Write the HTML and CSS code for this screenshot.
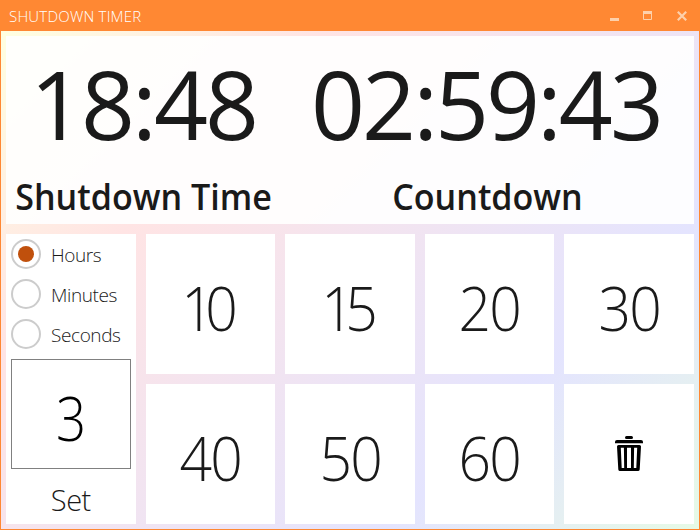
FILE: index.html
```html
<!DOCTYPE html>
<html lang="en">
<head>
<meta charset="utf-8">
<title>Shutdown Timer</title>
<link rel="stylesheet" href="styles.css">
</head>
<body>
<div class="window">
  <header class="titlebar">
    <span class="title">SHUTDOWN TIMER</span>
    <svg class="controls" width="80" height="12" viewBox="0 0 80 12" fill="none" stroke="#fdd0ab">
      <path d="M0 9.5H9" stroke-width="3"/>
      <path d="M33 2.5H42" stroke-width="3"/>
      <path d="M33.5 2V9.5H41.5V2"/>
      <path d="M67.8 1.8L76.2 10.2M76.2 1.8L67.8 10.2" stroke-width="2.2"/>
    </svg>
  </header>
  <main class="content">
    <section class="clocks">
      <div class="clock shutdown">
        <div class="digits">18:48</div>
        <div class="caption">Shutdown Time</div>
      </div>
      <div class="clock countdown">
        <div class="digits">02:59:43</div>
        <div class="caption">Countdown</div>
      </div>
    </section>
    <section class="board">
      <div class="custom">
        <div class="option"><span class="radio checked"></span><span class="label">Hours</span></div>
        <div class="option"><span class="radio"></span><span class="label">Minutes</span></div>
        <div class="option"><span class="radio"></span><span class="label">Seconds</span></div>
        <div class="amount"><span>3</span></div>
        <div class="set">Set</div>
      </div>
      <div class="tile narrow"><span>10</span></div>
      <div class="tile narrow"><span>15</span></div>
      <div class="tile"><span>20</span></div>
      <div class="tile"><span>30</span></div>
      <div class="tile"><span>40</span></div>
      <div class="tile"><span>50</span></div>
      <div class="tile"><span>60</span></div>
      <div class="tile">
        <svg class="trash" width="28" height="36" viewBox="0 0 28 36">
          <rect x="10" y="0" width="8" height="3" rx="1.5"/>
          <path d="M2 4H26Q28 4 28 6V7.3H0V6Q0 4 2 4Z"/>
          <path fill-rule="evenodd" d="M3.5 9H24.5Q26 9 26 10.5L24.7 33.5Q24.5 35 23 35H5Q3.5 35 3.3 33.5L2 10.5Q2 9 3.5 9ZM5.8 11.8L6.7 32H9.2L8.9 11.8ZM12 11.8V32H16V11.8ZM19.1 11.8L18.8 32H21.3L22.2 11.8Z"/>
        </svg>
      </div>
    </section>
  </main>
</div>
</body>
</html>
```
FILE: styles.css
```css
* { box-sizing: border-box; }

body {
  margin: 0;
  font-family: "Open Sans", "Noto Sans", sans-serif;
  color: #1a1a1a;
}

.window {
  width: 700px;
  height: 530px;
  display: flex;
  flex-direction: column;
  background: #ff8833;
  padding: 0 1px 1px;
  overflow: hidden;
}

.titlebar {
  flex: 0 0 31px;
  display: flex;
  align-items: center;
  justify-content: space-between;
  padding: 0 9px 0 8px;
  color: #fff;
}

.title {
  font-size: 15px;
  line-height: 20px;
  font-weight: 300;
  letter-spacing: 0.2px;
  padding-top: 1px;
}

.content {
  flex: 1;
  min-height: 0;
  display: flex;
  flex-direction: column;
  gap: 10px;
  padding: 5px;
  background: linear-gradient(135deg, #ffffe0 0%, #ffe4e4 27%, #e4e4fe 74%, #e6fae6 100%);
}

.clocks {
  flex: 0 0 188px;
  display: flex;
  background: rgba(255, 255, 255, 0.9);
}

.clock { text-align: center; white-space: nowrap; }
.shutdown { width: 275px; }
.countdown { flex: 1; }

.digits {
  font-size: 94.5px;
  line-height: 130px;
  height: 136px;
  padding-top: 3px;
  letter-spacing: -3px;
}

.shutdown .digits { padding-right: 1px; }
.countdown .digits { padding-right: 3px; }

.caption {
  font-size: 36px;
  line-height: 50px;
  font-weight: 600;
  transform: scaleX(0.946);
}

.board {
  flex: 1;
  min-height: 0;
  display: grid;
  grid-template-columns: repeat(5, 1fr);
  grid-template-rows: repeat(2, 140px);
  gap: 10px;
}

.custom {
  grid-row: span 2;
  background: #fff;
  padding: 5px;
}

.option {
  display: flex;
  align-items: center;
  gap: 10px;
  height: 30px;
  margin-bottom: 10px;
}

.radio {
  display: flex;
  align-items: center;
  justify-content: center;
  width: 30px;
  height: 30px;
  border: 2px solid #ccc;
  border-radius: 50%;
}

.checked::after {
  content: "";
  width: 16px;
  height: 16px;
  border-radius: 50%;
  background: #c0500c;
}

.label {
  font-size: 19px;
  line-height: 30px;
  font-weight: 300;
  padding-top: 1px;
  letter-spacing: -0.4px;
}

.amount {
  height: 110px;
  border: 1px solid #808080;
  display: flex;
  justify-content: center;
  font-size: 60px;
  line-height: 117px;
  font-weight: 300;
  color: #000;
}

.amount span { transform: scaleX(0.88); }

.set {
  text-align: center;
  font-size: 29px;
  line-height: 40px;
  height: 50px;
  padding-top: 11px;
  font-weight: 300;
  letter-spacing: -0.5px;
}

.tile {
  background: #fff;
  display: flex;
  align-items: center;
  justify-content: center;
  font-size: 60px;
  line-height: 80px;
  font-weight: 300;
  letter-spacing: -2px;
}

.tile span {
  padding-top: 7px;
  transform: scaleX(0.95);
}

.narrow { letter-spacing: -9px; }
.narrow span { margin-left: -10px; }
```
